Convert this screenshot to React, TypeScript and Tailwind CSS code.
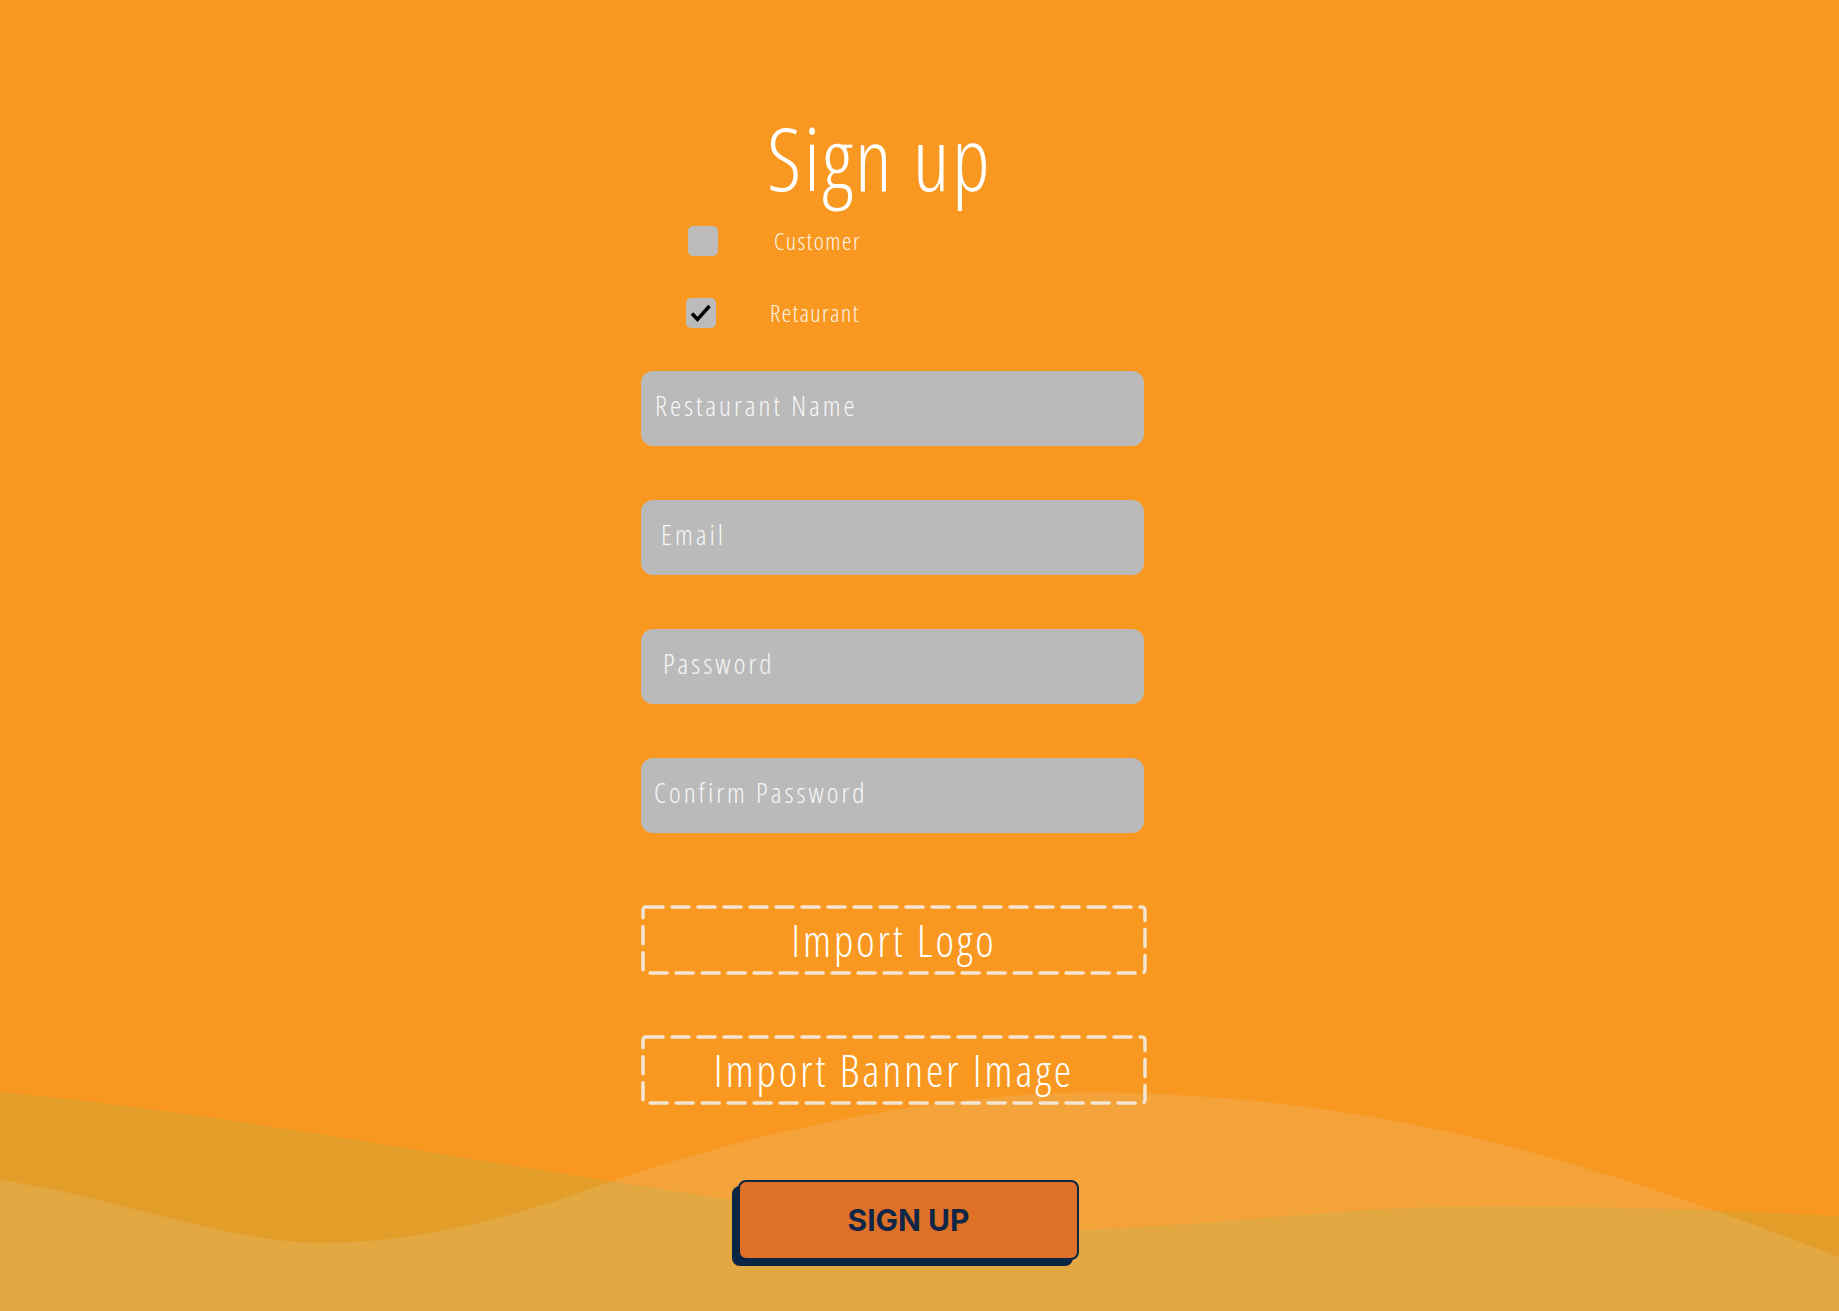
import { useState } from 'react';

const WAVE_TOP =
  'M0,1092 C300,1120 600,1190 950,1228 C1150,1240 1300,1205 1500,1206 C1650,1207 1750,1212 1839,1216 L1839,1311 L0,1311 Z';
const HILL =
  'M0,1180 C110,1195 230,1245 330,1243 C430,1241 520,1215 607,1183 C760,1130 950,1088 1125,1093 C1400,1100 1600,1165 1839,1257 L1839,1311 L0,1311 Z';

function Waves() {
  return (
    <svg className="absolute inset-0 h-full w-full" viewBox="0 0 1839 1311" preserveAspectRatio="none">
      <defs>
        <clipPath id="hill">
          <path d={HILL} />
        </clipPath>
      </defs>
      <path d={HILL} fill="#f4a23a" />
      <path d={WAVE_TOP} fill="#e39e29" />
      <path d={WAVE_TOP} fill="#e3a841" clipPath="url(#hill)" />
    </svg>
  );
}

function Check({ checked, onClick }: { checked: boolean; onClick: () => void }) {
  return (
    <button onClick={onClick} className="flex h-[30px] w-[30px] items-center justify-center rounded-[5px] bg-[#bbbbbb]">
      {checked && (
        <svg width="30" height="30" viewBox="0 0 30 30">
          <path d="M6 15.5 L11.5 21.5 L23.5 8" fill="none" stroke="#000" strokeWidth="3.5" />
        </svg>
      )}
    </button>
  );
}

// Abel isn't installed; condensed Open Sans light with a bit of tracking comes close
const abel = "font-['Open_Sans',sans-serif] font-light [font-stretch:75%]";

function Field({ placeholder, pad }: { placeholder: string; pad: string }) {
  return (
    <div className={`flex h-[75px] w-[503px] items-center rounded-[12px] bg-[#bababa] pb-[8px] ${pad}`}>
      <input
        placeholder={placeholder}
        type={placeholder.includes('Password') ? 'password' : 'text'}
        className={`w-full bg-transparent text-[28px] tracking-[3px] text-white outline-none placeholder:text-[#f7f7f7] ${abel}`}
      />
    </div>
  );
}

function DashedBox({ label }: { label: string }) {
  return (
    <button className="relative flex h-[70px] w-[506px] items-center justify-center">
      <svg className="absolute inset-0" width="506" height="70" viewBox="0 0 506 70">
        <rect
          x="2"
          y="2"
          width="502"
          height="66"
          rx="3"
          fill="none"
          stroke="#f4e4d2"
          strokeWidth="3.5"
          strokeDasharray="17 9"
          strokeLinecap="round"
        />
      </svg>
      <span className={`relative text-[44px] leading-none tracking-[3px] text-white ${abel}`}>{label}</span>
    </button>
  );
}

export default function App() {
  const [role, setRole] = useState<'customer' | 'restaurant'>('restaurant');

  return (
    <div className="relative min-h-screen w-full overflow-hidden bg-[#f99820]">
      <Waves />

      <div className="relative mx-auto flex w-[557px] flex-col pt-[115px]">
        <h1 className={`w-[477px] text-center text-[86px] leading-none tracking-[2.5px] text-white ${abel}`}>Sign up</h1>

        <div className="mt-[25px] ml-[47px] flex h-[30px] items-center gap-[56px]">
          <Check checked={role === 'customer'} onClick={() => setRole('customer')} />
          <span className={`text-[24px] tracking-[1.5px] text-[#fdf6ea] ${abel}`}>Customer</span>
        </div>
        <div className="mt-[42px] ml-[45px] flex h-[30px] items-center gap-[54px]">
          <Check checked={role === 'restaurant'} onClick={() => setRole('restaurant')} />
          <span className={`text-[24px] tracking-[1.5px] text-[#fdf6ea] ${abel}`}>Retaurant</span>
        </div>

        <div className="mt-[43px] flex flex-col gap-[54px]">
          <Field placeholder="Restaurant Name" pad="pl-[14px]" />
          <Field placeholder="Email" pad="pl-[20px]" />
          <Field placeholder="Password" pad="pl-[22px]" />
          <Field placeholder="Confirm Password" pad="pl-[13px]" />
        </div>

        <div className="mt-[72px] flex flex-col gap-[60px]">
          <DashedBox label="Import Logo" />
          <DashedBox label="Import Banner Image" />
        </div>

        <button className="mt-[75px] ml-[97px] flex h-[80px] w-[341px] items-center justify-center rounded-[8px] border-2 border-[#0b2545] bg-[#df7027] shadow-[-6px_6px_0_#0b2545]">
          <span className="font-['Inter',sans-serif] text-[30px] font-bold text-[#0f2647]">SIGN UP</span>
        </button>
      </div>
    </div>
  );
}
